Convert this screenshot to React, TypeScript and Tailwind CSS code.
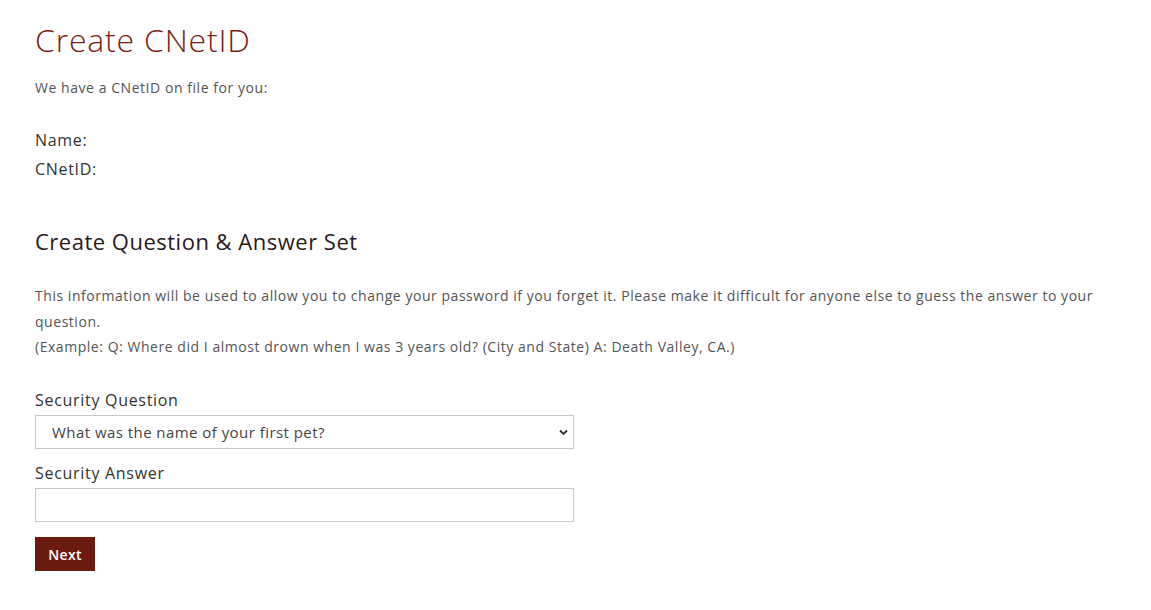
import React from "react";

export default function App() {
  return (
    <div
      className="min-h-[610px] bg-white px-[35px] pt-[20px] text-[#444]"
      style={{ fontFamily: '"Open Sans", "Liberation Sans", sans-serif' }}
    >
      <h1 className="text-[32px] font-light leading-[40px] tracking-[0.8px] text-[#7a1f14]">Create CNetID</h1>
      <p className="mt-[18px] text-[14px] leading-[20px] tracking-[0.55px] text-[#555]">We have a CNetID on file for you:</p>
      <div className="mt-[28px] text-[16px] leading-[29px] tracking-[0.7px] text-[#333]">
        <div>Name:</div>
        <div>CNetID:</div>
      </div>
      <h2 className="mt-[42px] text-[22px] leading-[30px] tracking-[0.5px] text-[#2a1a1a]">Create Question &amp; Answer Set</h2>
      <div className="mt-[27px] text-[14px] leading-[26px] tracking-[0.54px] text-[#555]">
        <p>
          This information will be used to allow you to change your password if you forget it. Please make it difficult for anyone else to guess the answer to your question.
        </p>
        <p className="leading-[24px]">(Example: Q: Where did I almost drown when I was 3 years old? (City and State) A: Death Valley, CA.)</p>
      </div>
      <form className="mt-[30px] w-[539px]" onSubmit={(e) => e.preventDefault()}>
        <label className="block text-[16px] leading-[22px] tracking-[0.7px] text-[#333]">Security Question</label>
        <div className="relative mt-[4px] h-[34px] border border-[#c8c8c8] bg-white">
          <select className="h-full w-full appearance-none bg-transparent pl-[16px] text-[15px] tracking-[0.45px] text-[#444] outline-none">
            <option>What was the name of your first pet?</option>
          </select>
          <svg className="pointer-events-none absolute right-[5px] top-[13px]" width="9" height="7" viewBox="0 0 9 7">
            <path d="M1 1.5 L4.5 5 L8 1.5" fill="none" stroke="#333" strokeWidth="1.8" />
          </svg>
        </div>
        <label className="mt-[13px] block text-[16px] leading-[22px] tracking-[0.7px] text-[#333]">Security Answer</label>
        <input type="text" className="mt-[4px] block h-[34px] w-full border border-[#c8c8c8] px-2 text-[14px] outline-none" />
        <button className="mt-[15px] h-[34px] w-[60px] bg-[#6b1a10] text-[14px] font-semibold tracking-[0.3px] text-white">Next</button>
      </form>
    </div>
  );
}
